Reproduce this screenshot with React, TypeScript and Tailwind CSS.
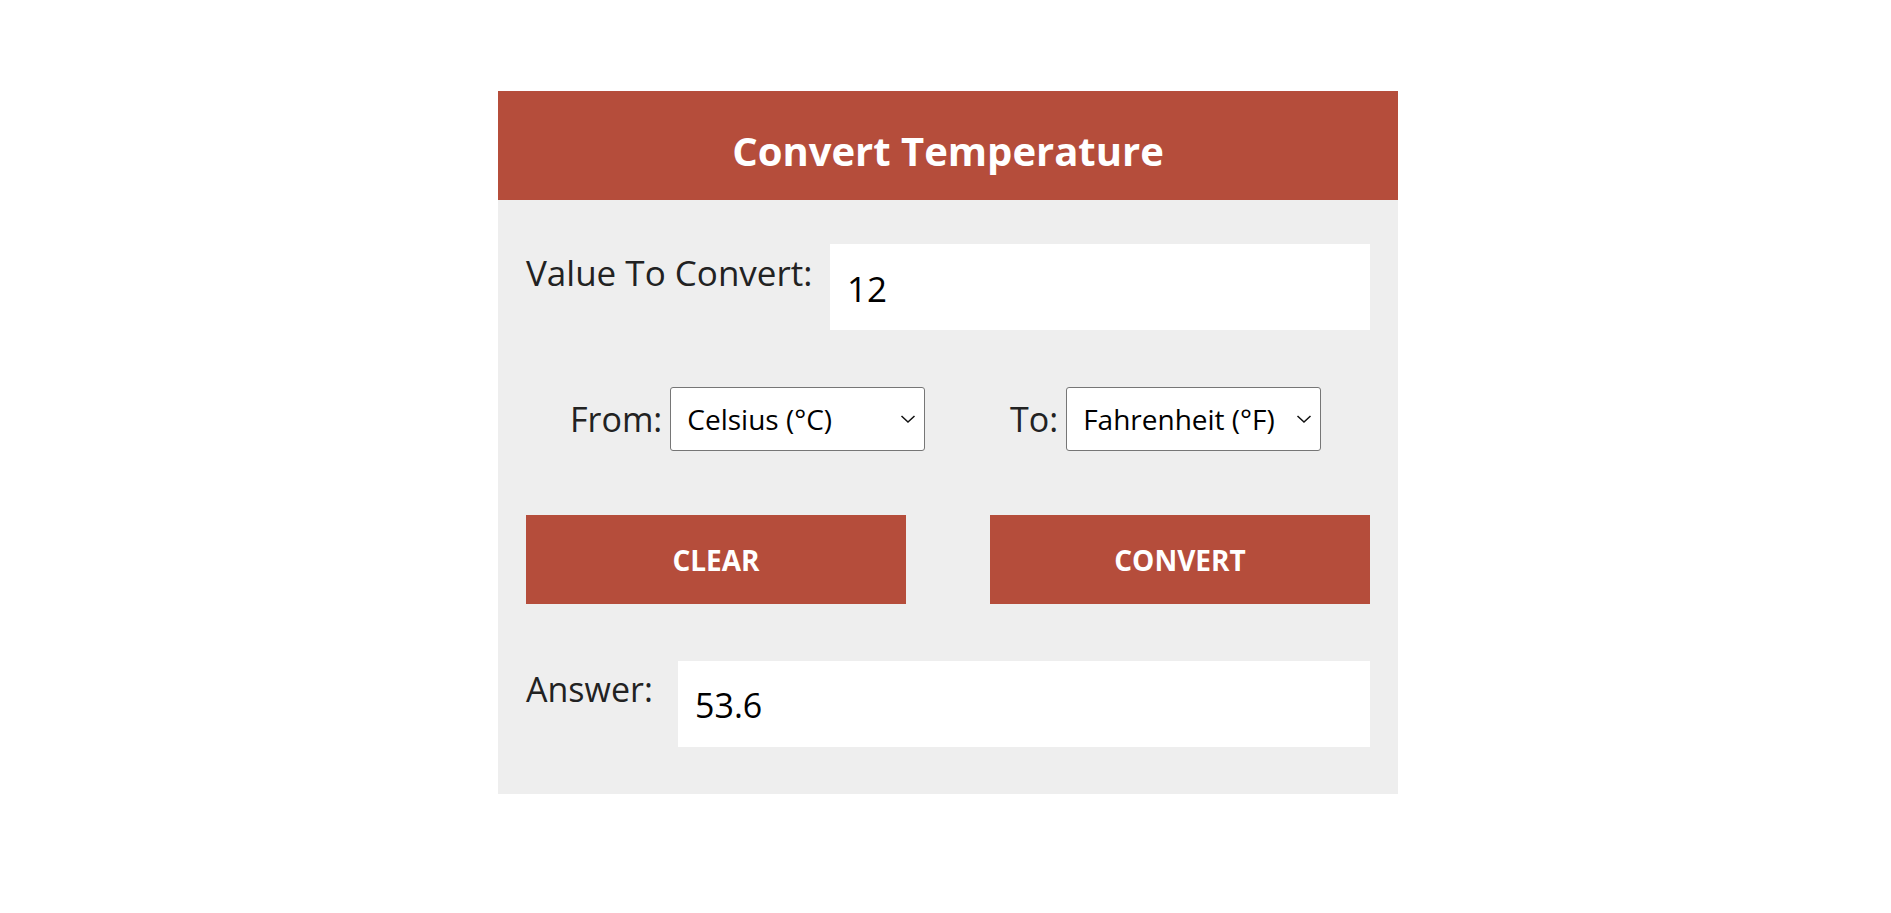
import React, { useState } from 'react';

const font = { fontFamily: '"Open Sans", "Noto Sans", sans-serif' };

function Chevron() {
  return (
    <svg
      className="pointer-events-none absolute right-[9px] top-1/2 -translate-y-1/2"
      width="16"
      height="9"
      viewBox="0 0 16 9"
      fill="none"
    >
      <path d="M1.5 1.5 L8 7.5 L14.5 1.5" stroke="#111" strokeWidth="1.5" />
    </svg>
  );
}

export default function App() {
  const [value, setValue] = useState('12');
  const [from, setFrom] = useState('C');
  const [to, setTo] = useState('F');
  const [answer, setAnswer] = useState('53.6');

  const convert = () => {
    const n = parseFloat(value);
    if (isNaN(n)) return;
    let c = n;
    if (from === 'F') c = ((n - 32) * 5) / 9;
    if (from === 'K') c = n - 273.15;
    let out = c;
    if (to === 'F') out = (c * 9) / 5 + 32;
    if (to === 'K') out = c + 273.15;
    setAnswer(String(Math.round(out * 100) / 100));
  };

  const clear = () => {
    setValue('');
    setAnswer('');
  };

  return (
    <div className="min-h-screen bg-white pt-[91px]" style={font}>
      <div className="mx-auto w-[905px] pl-[5px]">
        <div className="flex h-[109px] items-center justify-center bg-[#b54d3b] pt-[10px]">
          <h1 className="text-[40px] font-bold text-white">Convert Temperature</h1>
        </div>

        <div className="bg-[#eeeeee] px-[28px] pb-[47px] pt-[44px]">
          <div className="flex items-start">
            <label className="w-[304px] pt-[3px] text-[35px] text-[#222]">Value To Convert:</label>
            <input
              value={value}
              onChange={(e) => setValue(e.target.value)}
              className="h-[86px] flex-1 bg-white px-[17px] pt-[2px] text-[35px] text-black outline-none"
            />
          </div>

          <div className="mt-[57px] grid grid-cols-2">
            <div className="flex items-center gap-[8px] pl-[44px]">
              <span className="text-[34px] text-[#222]">From:</span>
              <div className="relative">
                <select
                  value={from}
                  onChange={(e) => setFrom(e.target.value)}
                  className="h-[64px] w-[255px] appearance-none rounded-[3px] border border-[#767676] bg-white pl-[16px] text-[28px] text-black"
                >
                  <option value="C">Celsius (°C)</option>
                  <option value="F">Fahrenheit (°F)</option>
                  <option value="K">Kelvin (K)</option>
                </select>
                <Chevron />
              </div>
            </div>
            <div className="flex items-center gap-[8px] pl-[62px]">
              <span className="text-[34px] text-[#222]">To:</span>
              <div className="relative">
                <select
                  value={to}
                  onChange={(e) => setTo(e.target.value)}
                  className="h-[64px] w-[255px] appearance-none rounded-[3px] border border-[#767676] bg-white pl-[16px] text-[28px] text-black"
                >
                  <option value="C">Celsius (°C)</option>
                  <option value="F">Fahrenheit (°F)</option>
                  <option value="K">Kelvin (K)</option>
                </select>
                <Chevron />
              </div>
            </div>
          </div>

          <div className="mt-[64px] flex justify-between">
            <button
              onClick={clear}
              className="h-[89px] w-[380px] bg-[#b54d3b] text-[28px] font-bold text-white"
            >
              CLEAR
            </button>
            <button
              onClick={convert}
              className="h-[89px] w-[380px] bg-[#b54d3b] text-[28px] font-bold text-white"
            >
              CONVERT
            </button>
          </div>

          <div className="mt-[57px] flex items-start">
            <label className="w-[152px] pt-[3px] text-[34px] text-[#222]">Answer:</label>
            <input
              value={answer}
              readOnly
              className="h-[86px] flex-1 bg-white px-[17px] pt-[2px] text-[34px] text-black outline-none"
            />
          </div>
        </div>
      </div>
    </div>
  );
}
